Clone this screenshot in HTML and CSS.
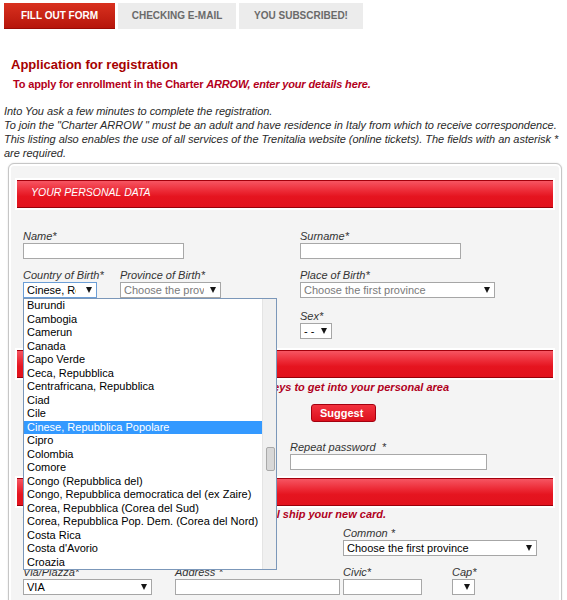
FILE: index.html
```html
<!DOCTYPE html>
<html lang="en">
<head>
<meta charset="utf-8">
<title>Application for registration</title>
<link rel="stylesheet" href="styles.css">
</head>
<body>
<div class="page">
  <nav class="tabs">
    <a class="tab tab-active">FILL OUT FORM</a>
    <a class="tab tab-2">CHECKING E-MAIL</a>
    <a class="tab tab-3">YOU SUBSCRIBED!</a>
  </nav>

  <h1 class="title">Application for registration</h1>
  <p class="subtitle">To apply for enrollment in the Charter <em>ARROW, enter your details here.</em></p>
  <p class="intro">Into You ask a few minutes to complete the registration.<br>To join the "Charter ARROW " must be an adult and have residence in Italy from which to receive correspondence.<br>This listing also enables the use of all services of the Trenitalia website (online tickets). The fields with an asterisk * are required.</p>

  <div class="card">
    <section class="sec">
      <h2 class="sec-head">YOUR PERSONAL DATA</h2>
      <div class="sec-body s1">
        <div class="row cols-a r-name">
          <div class="field"><label class="lbl">Name*</label><input class="inp w161" type="text"></div>
          <div class="field"><label class="lbl">Surname*</label><input class="inp w161" type="text"></div>
        </div>
        <div class="row cols-a r-birth">
          <div class="pair">
            <div class="field country">
              <label class="lbl">Country of Birth*</label>
              <div class="sel w74 focus"><span class="sel-text">Cinese, Repubblica Popolare</span><i class="caret"></i></div>
              <div class="dropdown">
                <ul class="dd-list">
                  <li>Burundi</li>
                  <li>Cambogia</li>
                  <li>Camerun</li>
                  <li>Canada</li>
                  <li>Capo Verde</li>
                  <li>Ceca, Repubblica</li>
                  <li>Centrafricana, Repubblica</li>
                  <li>Ciad</li>
                  <li>Cile</li>
                  <li class="on">Cinese, Repubblica Popolare</li>
                  <li>Cipro</li>
                  <li>Colombia</li>
                  <li>Comore</li>
                  <li>Congo (Repubblica del)</li>
                  <li>Congo, Repubblica democratica del (ex Zaire)</li>
                  <li>Corea, Repubblica (Corea del Sud)</li>
                  <li>Corea, Repubblica Pop. Dem. (Corea del Nord)</li>
                  <li>Costa Rica</li>
                  <li>Costa d'Avorio</li>
                  <li>Croazia</li>
                </ul>
                <div class="dd-scroll"><span class="dd-thumb"></span></div>
              </div>
            </div>
            <div class="field province">
              <label class="lbl">Province of Birth*</label>
              <div class="sel w101 muted"><span class="sel-text">Choose the province</span><i class="caret"></i></div>
            </div>
          </div>
          <div class="field">
            <label class="lbl">Place of Birth*</label>
            <div class="sel w195 muted"><span class="sel-text">Choose the first province</span><i class="caret"></i></div>
          </div>
        </div>
        <div class="row cols-a r-sex">
          <div class="field"></div>
          <div class="field">
            <label class="lbl">Sex*</label>
            <div class="sel w32"><span class="sel-text">- -</span><i class="caret"></i></div>
          </div>
        </div>
      </div>
    </section>

    <section class="sec">
      <h2 class="sec-head">ACCESS DATA</h2>
      <div class="sec-body s2">
        <p class="note">Choose username and password: they are the keys to get into your personal area</p>
        <div class="row cols-b r-user">
          <div class="field"><input class="inp w161" type="text"></div>
          <div class="field"><button class="btn" type="button">Suggest</button></div>
        </div>
        <div class="row cols-b r-pass">
          <div class="field"><span class="lbl-gap"></span><input class="inp w161" type="password"></div>
          <div class="field"><label class="lbl">Repeat password&nbsp; *</label><input class="inp w197" type="password"></div>
        </div>
      </div>
    </section>

    <section class="sec">
      <h2 class="sec-head">RESIDENCE ADDRESS</h2>
      <div class="sec-body s3">
        <p class="note">Please enter below the full address where we will ship your new card.</p>
        <div class="row cols-c r-common">
          <div class="field span-2">
            <span class="lbl-gap"></span>
            <div class="sel w150 muted"><span class="sel-text"></span><i class="caret"></i></div>
          </div>
          <div class="field span-2">
            <label class="lbl">Common *</label>
            <div class="sel w194"><span class="sel-text">Choose the first province</span><i class="caret"></i></div>
          </div>
        </div>
        <div class="row cols-c r-via">
          <div class="field">
            <label class="lbl">Via/Piazza*</label>
            <div class="sel w129"><span class="sel-text">VIA</span><i class="caret"></i></div>
          </div>
          <div class="field"><label class="lbl">Address *</label><input class="inp w165" type="text"></div>
          <div class="field"><label class="lbl">Civic*</label><input class="inp w79" type="text"></div>
          <div class="field">
            <label class="lbl">Cap*</label>
            <div class="sel w23"><span class="sel-text"></span><i class="caret"></i></div>
          </div>
        </div>
      </div>
    </section>
  </div>
</div>
</body>
</html>
```

FILE: styles.css
```css
* { box-sizing: border-box; }

html, body { margin: 0; }

body {
  background: #fff;
  font-family: "Liberation Sans", Arial, sans-serif;
  color: #222;
}

.page { padding: 3px 0 0 4px; }

/* ---------- tabs ---------- */
.tabs { display: flex; gap: 3px; height: 26px; }

.tab {
  display: block;
  height: 26px;
  line-height: 26px;
  text-align: center;
  font-size: 10px;
  font-weight: bold;
  color: #6a6a6a;
  background: #ececec;
  text-decoration: none;
}
.tab-active {
  width: 111px;
  color: #fff;
  background: linear-gradient(#d9311f, #b6160b);
  border-bottom: 1px solid #9a0c05;
}
.tab-2 { width: 118px; }
.tab-3 { width: 124px; }

/* ---------- intro ---------- */
.title {
  margin: 28px 0 0 7px;
  font-size: 13px;
  line-height: 16px;
  font-weight: bold;
  color: #a60000;
}
.subtitle {
  margin: 4px 0 0 9px;
  font-size: 11px;
  line-height: 14px;
  font-weight: bold;
  letter-spacing: -0.15px;
  color: #b3001b;
}
.subtitle em { font-style: italic; }

.intro {
  margin: 13px 0 0;
  font-size: 11px;
  line-height: 14px;
  font-style: italic;
  letter-spacing: -0.03px;
  color: #2a2a2a;
}

/* ---------- card ---------- */
.card {
  margin: 3px 5px 0 4px;
  padding: 16px 8px 20px;
  border: 1px solid #c6c6c6;
  border-radius: 6px;
  background: #f4f4f4;
  box-shadow: inset 0 0 0 2px #fff, 0 0 2px rgba(0, 0, 0, 0.12);
}

.sec-head {
  margin: 0;
  height: 28px;
  padding: 0 0 0 14px;
  font-size: 10.5px;
  line-height: 22px;
  font-style: italic;
  font-weight: normal;
  color: #fff;
  background: linear-gradient(#f65562 0%, #ec2834 40%, #e5141f 60%, #e2121d 100%);
  border-top: 1px solid #a3000c;
  border-bottom: 1px solid #98000a;
  box-shadow: 0 0 0 2px #fff;
}

.sec-body { padding: 0 6px; }
.s1 { padding-bottom: 11px; }
.s2 { padding-bottom: 8px; }

.row { display: grid; }
.cols-a { grid-template-columns: 277px 1fr; }
.cols-b { grid-template-columns: 267px 1fr; align-items: center; }
.cols-c { grid-template-columns: 152px 168px 109px 1fr; }
.span-2 { grid-column: span 2; }

.r-name { margin-top: 21px; }
.r-birth { margin-top: 9px; }
.r-sex { margin-top: 11px; }
.r-user { margin-top: 10px; }
.r-pass { margin-top: 18px; }
.r-common { margin-top: 5px; }
.r-via { margin-top: 9px; }

.note {
  margin: 2px 0 0;
  font-size: 11px;
  line-height: 14px;
  font-weight: bold;
  font-style: italic;
  color: #b0001c;
  white-space: nowrap;
}
.s3 .note { margin-top: 1px; }

.pair { display: flex; gap: 23px; }
.field { position: relative; }
.country { width: 74px; }

.lbl {
  display: block;
  font-size: 11px;
  line-height: 14px;
  font-style: italic;
  color: #333;
  white-space: nowrap;
}
.lbl-gap { display: block; height: 14px; }

/* ---------- controls ---------- */
.inp {
  display: block;
  height: 16px;
  margin: 0;
  padding: 0 2px;
  border: 1px solid #a8a8a8;
  background: #fff;
  font: 11px "Liberation Sans", Arial, sans-serif;
}

.sel {
  display: flex;
  align-items: center;
  height: 16px;
  padding-left: 3px;
  border: 1px solid #a6a6a6;
  background: #fff;
  font-size: 11px;
  color: #000;
  overflow: hidden;
}
.sel.focus { border-color: #6c9ed6; }
.sel.muted { color: #7a7a7a; }
.sel-text {
  flex: 1;
  min-width: 0;
  overflow: hidden;
  white-space: nowrap;
  line-height: 14px;
}
.caret {
  flex: none;
  width: 0;
  height: 0;
  margin: 0 4px 0 6px;
  border-left: 3px solid transparent;
  border-right: 3px solid transparent;
  border-top: 6px solid #151515;
}
.sel.focus .caret { margin-left: 10px; }

.w23 { width: 23px; }
.w32 { width: 32px; }
.w74 { width: 74px; }
.w79 { width: 79px; }
.w101 { width: 101px; }
.w129 { width: 129px; }
.w150 { width: 150px; }
.w161 { width: 161px; }
.w165 { width: 165px; }
.w194 { width: 194px; }
.w195 { width: 195px; }
.w197 { width: 197px; }

.btn {
  display: block;
  width: 65px;
  height: 18px;
  margin: 0 0 0 21px;
  padding: 0 0 0 8px;
  border: 1px solid #a4000f;
  border-radius: 3px;
  background: linear-gradient(#f2323e, #dc101c);
  color: #fff;
  font: bold 11px/15px "Liberation Sans", Arial, sans-serif;
  text-align: left;
}

/* ---------- open list of the country select ---------- */
.dropdown {
  position: absolute;
  top: 100%;
  left: 0;
  z-index: 10;
  display: flex;
  width: 254px;
  height: 272px;
  border: 1px solid #7b97b9;
  background: #fff;
  overflow: hidden;
}
.dd-list {
  flex: 1;
  margin: 0;
  padding: 0;
  list-style: none;
}
.dd-list li {
  height: 13.5px;
  padding-left: 3px;
  font-size: 11px;
  line-height: 13.5px;
  color: #000;
  white-space: nowrap;
}
.dd-list li.on { background: #3399ff; color: #fff; }

.dd-scroll {
  position: relative;
  flex: none;
  width: 14px;
  background: #f0f0f0;
  border-left: 1px solid #e4e4e4;
}
.dd-thumb {
  position: absolute;
  top: 148px;
  left: 3px;
  width: 9px;
  height: 24px;
  border: 1px solid #a9a9a9;
  border-radius: 2px;
  background: #d8d8d8;
}
```
